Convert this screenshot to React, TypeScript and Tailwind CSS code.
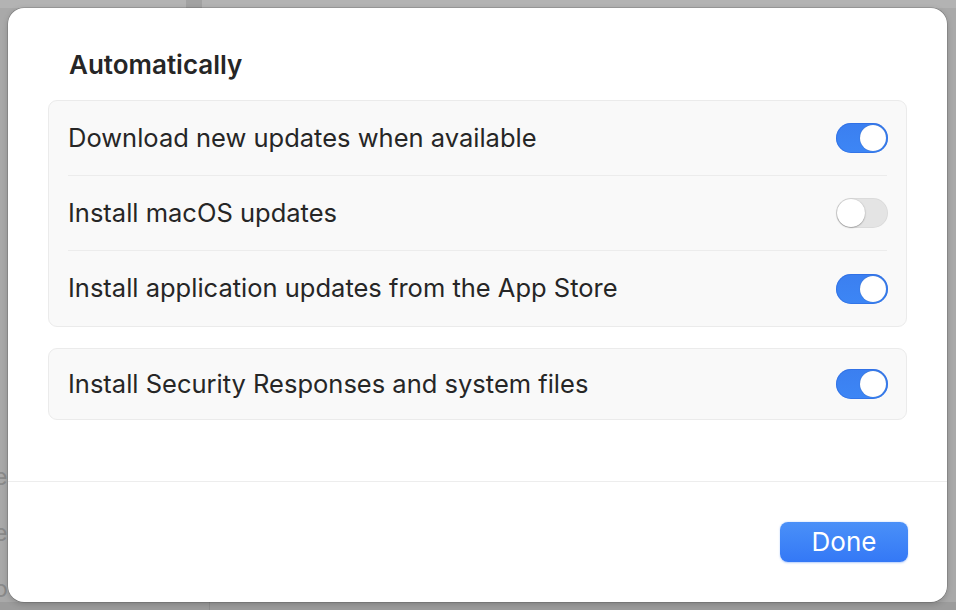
import React from "react";

function Toggle({ on }: { on: boolean }) {
  return on ? (
    <div className="relative mr-[-1px] h-[30px] w-[52px] shrink-0 rounded-full bg-gradient-to-b from-[#3b7ff0] to-[#3d86f5] shadow-[inset_0_0_0_1px_rgba(40,100,220,0.5)]">
      <div className="absolute right-[2px] top-[2px] h-[26px] w-[26px] rounded-full bg-white shadow-[0_0_1px_rgba(0,0,0,0.3)]" />
    </div>
  ) : (
    <div className="relative mr-[-1px] h-[30px] w-[52px] shrink-0 rounded-full bg-[#e4e4e4] shadow-[inset_0_0_0_1px_rgba(0,0,0,0.04)]">
      <div className="absolute left-[1px] top-[1px] h-[28px] w-[28px] rounded-full bg-white shadow-[0_0.5px_1.5px_rgba(0,0,0,0.45)]" />
    </div>
  );
}

function Row({ label, on, divider }: { label: string; on: boolean; divider?: boolean }) {
  return (
    <div className={`flex h-[75px] items-center justify-between ${divider ? "border-b border-[#ececec]" : ""}`}>
      <span className="text-[25.5px] text-[#262626]">{label}</span>
      <Toggle on={on} />
    </div>
  );
}

export default function App() {
  return (
    <div
      className="relative h-[610px] w-[956px] overflow-hidden bg-[#a9a9a9]"
      style={{ fontFamily: "Inter, 'Noto Sans', sans-serif" }}
    >
      {/* background window hints */}
      <div className="absolute left-0 top-0 h-[8px] w-full bg-[#b3b3b3]" />
      <div className="absolute left-[186px] top-0 h-[8px] w-[16px] bg-[#a2a2a2]" />
      <div className="absolute bottom-0 left-0 h-[8px] w-full bg-[#9c9c9c]" />
      <div className="absolute bottom-0 left-[209px] h-[8px] w-[1px] bg-[#8f8f8f]" />
      <div className="absolute left-[-6px] top-[466px] text-[23px] leading-none text-[#8a8a8a]">e</div>
      <div className="absolute left-[-6px] top-[522px] text-[23px] leading-none text-[#8a8a8a]">e</div>
      <div className="absolute left-[-6px] top-[578px] text-[23px] leading-none text-[#8a8a8a]">o</div>

      <div className="absolute left-[8px] top-[8px] flex h-[594px] w-[939px] flex-col rounded-[16px] bg-white shadow-[0_0_0_0.5px_rgba(0,0,0,0.25),0_2px_6px_rgba(0,0,0,0.2)]">
        <div className="flex flex-1 flex-col px-[40px]">
          <div className="pl-[21px] pt-[41px] text-[26px] font-semibold leading-[32px] text-[#262626]">
            Automatically
          </div>
          <div className="mt-[19px] rounded-[9px] border border-[#ebebeb] bg-[#f9f9f9] px-[19px]">
            <Row label="Download new updates when available" on divider />
            <Row label="Install macOS updates" on={false} divider />
            <Row label="Install application updates from the App Store" on />
          </div>
          <div className="mt-[21px] rounded-[9px] border border-[#ebebeb] bg-[#f9f9f9] px-[19px]">
            <div className="flex h-[70px] items-center justify-between">
              <span className="text-[25.5px] text-[#262626]">Install Security Responses and system files</span>
              <Toggle on />
            </div>
          </div>
        </div>
        <div className="h-[1px] bg-[#ededed]" />
        <div className="flex h-[120px] items-start justify-end px-[39px] pt-[40px]">
          <button className="h-[40px] w-[128px] rounded-[8px] bg-gradient-to-b from-[#4a90f8] to-[#3478f6] text-[26px] leading-none text-white shadow-[0_0.5px_2px_rgba(40,110,240,0.35)]">
            Done
          </button>
        </div>
      </div>
    </div>
  );
}
